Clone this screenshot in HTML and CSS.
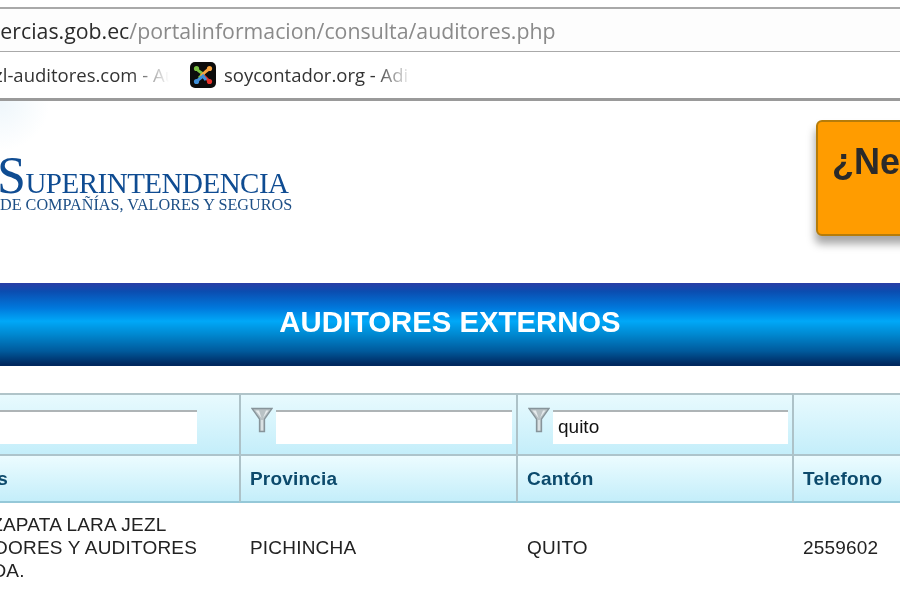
FILE: index.html
```html
<!DOCTYPE html>
<html lang="es">
<head>
    <meta charset="UTF-8">
    <meta name="viewport" content="width=device-width, initial-scale=1.0">
    <title>Auditores Externos</title>
    <link rel="stylesheet" href="styles.css">
</head>
<body>
    <div class="browser">
        <div class="address">
            <span class="url">www.supercias.gob.ec<span class="url-path">/portalinformacion/consulta/auditores.php</span></span>
        </div>
        <div class="bookmarks">
            <span class="bookmark bookmark-first">jezl-auditores.com - Auditores</span>
            <svg class="favicon" viewBox="0 0 26 26" aria-hidden="true">
                <rect width="26" height="26" rx="5" fill="#0c0c0c"/>
                <path d="M7 7 C9 10 11 10 13 12 L9 16" fill="none" stroke="#7ac143" stroke-width="3"/>
                <path d="M19 7 C16 9 15 10 12 13 L16 17" fill="none" stroke="#f9a541" stroke-width="3"/>
                <path d="M19 19 C17 17 15 15 14 14" fill="none" stroke="#e8322a" stroke-width="3"/>
                <path d="M7 19 C9 17 11 16 13 14 L16 18" fill="none" stroke="#3f8fd8" stroke-width="3"/>
                <circle cx="6.5" cy="6.5" r="2.6" fill="#7ac143"/>
                <circle cx="19.5" cy="6.5" r="2.6" fill="#f9a541"/>
                <circle cx="19.5" cy="19.5" r="2.6" fill="#e8322a"/>
                <circle cx="6.5" cy="19.5" r="2.6" fill="#3f8fd8"/>
            </svg>
            <span class="bookmark bookmark-second">soycontador.org - Adi</span>
        </div>
    </div>

    <div class="header">
        <div class="logo">
            <div class="logo-name"><span class="logo-s">S</span>UPERINTENDENCIA</div>
            <div class="logo-sub">DE COMPAÑÍAS, VALORES Y SEGUROS</div>
        </div>
        <div class="promo">¿Necesita</div>
    </div>

    <div class="banner">AUDITORES EXTERNOS</div>

    <div class="grid">
        <div class="cell filter first">
            <svg class="funnel" viewBox="0 0 22 26" aria-hidden="true">
                <path d="M1 1.5 H21 L13.5 12 V24.5 H8.5 V12 Z" fill="#b9c2c5" stroke="#87949a" stroke-width="1.3"/>
                <path d="M4.5 3.5 H8 L10.5 11 Z M17.5 3.5 H15 L12 11 Z" fill="#e6ebed"/>
                <path d="M11 13 V23.5" stroke="#e6ebed" stroke-width="1.5"/>
            </svg>
            <input class="filter-input" type="text">
        </div>
        <div class="cell filter">
            <svg class="funnel" viewBox="0 0 22 26" aria-hidden="true">
                <path d="M1 1.5 H21 L13.5 12 V24.5 H8.5 V12 Z" fill="#b9c2c5" stroke="#87949a" stroke-width="1.3"/>
                <path d="M4.5 3.5 H8 L10.5 11 Z M17.5 3.5 H15 L12 11 Z" fill="#e6ebed"/>
                <path d="M11 13 V23.5" stroke="#e6ebed" stroke-width="1.5"/>
            </svg>
            <input class="filter-input" type="text">
        </div>
        <div class="cell filter">
            <svg class="funnel" viewBox="0 0 22 26" aria-hidden="true">
                <path d="M1 1.5 H21 L13.5 12 V24.5 H8.5 V12 Z" fill="#b9c2c5" stroke="#87949a" stroke-width="1.3"/>
                <path d="M4.5 3.5 H8 L10.5 11 Z M17.5 3.5 H15 L12 11 Z" fill="#e6ebed"/>
                <path d="M11 13 V23.5" stroke="#e6ebed" stroke-width="1.5"/>
            </svg>
            <input class="filter-input" type="text" value="quito">
        </div>
        <div class="cell filter"></div>

        <div class="cell head first head-name">Nombres</div>
        <div class="cell head">Provincia</div>
        <div class="cell head">Cantón</div>
        <div class="cell head">Telefono</div>

        <div class="cell data data-name">AUDIT ZAPATA LARA JEZL<br>CONTADORES Y AUDITORES<br>CIA. LTDA.</div>
        <div class="cell data">PICHINCHA</div>
        <div class="cell data">QUITO</div>
        <div class="cell data">2559602</div>
    </div>
</body>
</html>
```

FILE: styles.css
```css
/* base */
html, body {
    height: 100%;
    overflow: hidden;
}
body {
    margin: 0;
    background-color: #fff;
    font-family: 'Liberation Sans', Arial, sans-serif;
    color: #222;
    filter: blur(0.4px); /* the reference is a soft, scaled-up capture */
}

/* browser bars */
.browser {
    padding-top: 7px;
    font-family: 'Open Sans', 'Noto Sans', sans-serif;
    white-space: nowrap;
}
.address {
    height: 42px;
    line-height: 43px;
    border-top: 2px solid #a9a9a9;
    border-bottom: 1px solid #a9a9a9;
    background-color: #fdfdfd;
    overflow: hidden;
}
.url {
    display: block;
    margin-left: -91px;
    font-size: 21.3px;
    color: #2b2b2b;
}
.url-path {
    color: #8a8a8a;
}
.bookmarks {
    display: flex;
    align-items: center;
    height: 46px;
    border-bottom: 3px solid #9a9a9a;
    overflow: hidden;
}
.bookmark {
    flex-shrink: 0;
    padding-bottom: 2px;
    font-size: 18.5px;
    color: #333;
    overflow: hidden;
    -webkit-mask-image: linear-gradient(to right, #000 80%, transparent 100%);
    mask-image: linear-gradient(to right, #000 80%, transparent 100%);
}
.bookmark-first {
    width: 190px;
    margin-left: -21px;
}
.favicon {
    flex-shrink: 0;
    width: 26px;
    height: 26px;
    margin-left: 21px;
}
.bookmark-second {
    width: 188px;
    margin-left: 8px;
}

/* header */
.header {
    display: flex;
    justify-content: space-between;
    height: 182px;
    background: radial-gradient(circle at 0 0, #eef6fb 0, #fff 50px);
    overflow: hidden;
}
.logo {
    margin-top: 52px;
    white-space: nowrap;
    font-family: 'Liberation Serif', serif;
}
.logo-name {
    height: 44px;
    line-height: 46px;
    font-size: 29px;
    letter-spacing: -0.5px;
    color: #0f4c92;
}
.logo-s {
    margin-left: -3px;
    font-size: 52px;
    line-height: 46px;
}
.logo-sub {
    font-size: 16.2px;
    line-height: 16px;
    color: #1d4f86;
}
.promo {
    flex-shrink: 0;
    width: 200px;
    height: 94px;
    margin: 19px -148px 0 0;
    padding: 18px 14px 0;
    border: 2px solid #b57c0a;
    border-radius: 6px;
    background-color: #ff9c00;
    box-shadow: -1px 8px 8px rgba(0,0,0,0.35);
    font-size: 36px;
    font-weight: bold;
    line-height: 44px;
    color: #2a2a2a;
}

/* banner */
.banner {
    height: 83px;
    line-height: 77px;
    text-align: center;
    font-size: 29.3px;
    font-weight: bold;
    color: #fff;
    background: linear-gradient(to bottom, #2a3ea6 0, #0b4db0 10%, #0078dc 30%, #00a8f8 46%, #0088d0 62%, #005a9c 82%, #00285f 98%);
}

/* table */
.grid {
    display: grid;
    grid-template-columns: 311px 277px 276px 200px;
    grid-template-rows: 61px 49px 88px;
    margin: 27px 0 0 -72px;
}
.cell {
    box-sizing: border-box;
    display: flex;
    align-items: center;
    padding: 0 4px 0 9px;
    border-left: 2px solid #adc2c8;
    font-size: 19px;
    letter-spacing: 0.2px;
}
.first {
    padding-left: 7px;
    border-left: none;
}
.filter {
    align-items: flex-start;
    gap: 3px;
    padding-top: 15px;
    border-top: 2px solid #b0c4c9;
    background: linear-gradient(to bottom, #e8fafe, #c4eefa);
}
.filter.first {
    padding-right: 42px;
}
.funnel {
    flex-shrink: 0;
    width: 22px;
    height: 26px;
    margin: -3px 0 0 1px;
}
.filter-input {
    flex: 1;
    min-width: 0;
    box-sizing: border-box;
    height: 34px;
    padding: 0 5px 2px;
    border: none;
    border-top: 2px solid #aeb4b6;
    border-radius: 0;
    outline: none;
    background-color: #fff;
    font-family: 'Liberation Sans', Arial, sans-serif;
    font-size: 19px;
    color: #111;
}
.head {
    border-top: 2px solid #adc4cb;
    border-bottom: 2px solid #95c8d8;
    background: linear-gradient(to bottom, #ecfcff, #c4eefa);
    font-weight: bold;
    color: #0c4a6c;
}
.head-name {
    justify-content: flex-end;
    padding-right: 231px;
}
.data {
    padding: 1px 0 0 11px;
    border-left: none;
    line-height: 23px;
    color: #222;
}
.data-name {
    padding-left: 0;
}
```
